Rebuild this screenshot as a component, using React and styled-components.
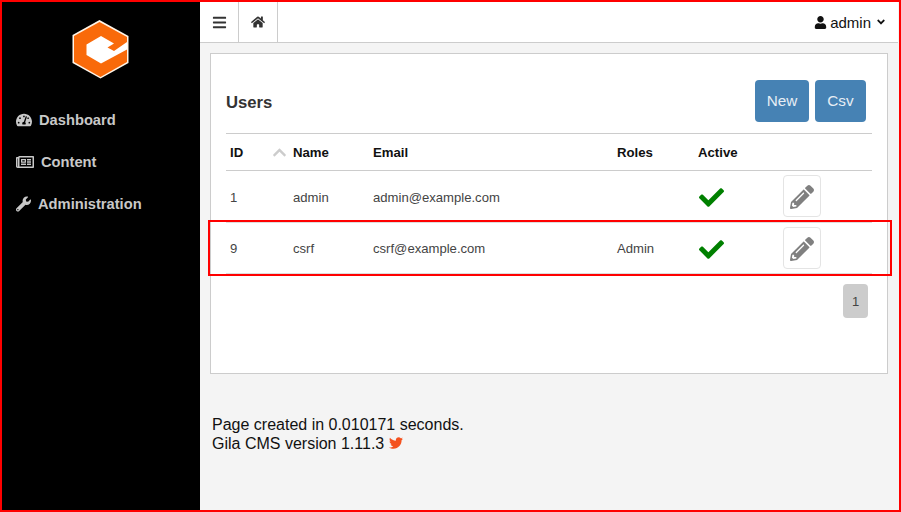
import React from "react";
import styled, { createGlobalStyle } from "styled-components";
import {
  FaBars,
  FaHome,
  FaTachometerAlt,
  FaRegNewspaper,
  FaWrench,
  FaUser,
  FaCheck,
  FaPencilAlt,
  FaTwitter,
  FaChevronUp,
  FaAngleDown,
} from "react-icons/fa";

const GlobalStyle = createGlobalStyle`
  html, body {
    margin: 0;
    padding: 0;
  }
  body {
    font-family: "Liberation Sans", Arial, sans-serif;
    font-size: 13px;
    color: #333;
    background: #f4f4f4;
  }
  * {
    box-sizing: border-box;
  }
`;

const Page = styled.div`
  position: relative;
  display: flex;
  width: 901px;
  height: 512px;
  border: 2px solid #f00;
  overflow: hidden;
  background: #f4f4f4;
`;

const Sidebar = styled.aside`
  flex: 0 0 198px;
  background: #000;
  padding-top: 18px;
`;

const LogoWrap = styled.div`
  display: flex;
  justify-content: center;
  height: 59px;
  margin-bottom: 20px;
`;

const NavItem = styled.a`
  display: flex;
  align-items: center;
  height: 42px;
  padding-left: 14px;
  color: #c8c8c8;
  font-size: 14.7px;
  font-weight: 700;

  svg {
    width: ${(p) => p.$iconSize || 16}px;
    height: 16px;
    margin-right: 7px;
  }
`;

const Main = styled.main`
  flex: 1;
  padding-right: 2px;
`;

const Topbar = styled.header`
  display: flex;
  align-items: stretch;
  height: 41px;
  background: #fff;
  border-bottom: 1px solid #ccc;
  color: #333;
`;

const TopButton = styled.div`
  display: flex;
  align-items: center;
  justify-content: center;
  width: 39px;
  border-right: 1px solid #ccc;
  font-size: ${(p) => p.$size}px;
`;

const UserMenu = styled.div`
  display: flex;
  align-items: center;
  margin-left: auto;
  padding-right: 11px;
  color: #111;
  font-size: 15px;
  gap: 3px;
`;

const MenuCaret = styled(FaAngleDown)`
  margin-left: 1px;
`;

const Panel = styled.section`
  height: 321px;
  margin: 10px 10px 0;
  padding: 26px 15px 0;
  background: #fff;
  border: 1px solid #ccc;
`;

const PanelHead = styled.div`
  display: flex;
  align-items: center;
  justify-content: space-between;
  height: 42px;
  padding-right: 6px;
  margin-bottom: 11px;
`;

const Title = styled.h2`
  margin: 0;
  padding-top: 4px;
  font-size: 16.7px;
  font-weight: 700;
  color: #333;
`;

const Actions = styled.div`
  display: flex;
  gap: 6px;
`;

const ActionButton = styled.button`
  width: ${(p) => p.$width}px;
  height: 42px;
  padding: 0;
  border: 0;
  border-radius: 4px;
  background: #4682b4;
  color: #e8eef4;
  font-family: inherit;
  font-size: 15.3px;
`;

const Table = styled.table`
  width: 646px;
  border-collapse: collapse;
  table-layout: fixed;
  border-top: 1px solid #ccc;
`;

const HeadCell = styled.th`
  position: relative;
  height: 37px;
  padding: 0 4px;
  border-bottom: 1px solid #ccc;
  color: #111;
  font-size: 13.2px;
  font-weight: 700;
  text-align: left;
`;

const SortIcon = styled(FaChevronUp)`
  position: absolute;
  right: 2px;
  top: 11px;
  width: 15px;
  height: 15px;
  color: #ccc;
`;

const Row = styled.tr`
  height: ${(p) => p.$height}px;
`;

const Cell = styled.td`
  padding: 1px 4px 0;
  border-bottom: 1px solid #ddd;
  color: #444;
  font-size: 13.1px;
`;

const EditCell = styled(Cell)`
  vertical-align: top;
  padding-top: 4px;
`;

const CheckIcon = styled(FaCheck)`
  display: block;
  width: 25px;
  height: 25px;
  margin: 1px 0 0 1px;
  color: #008000;
`;

const EditButton = styled.div`
  display: flex;
  align-items: center;
  justify-content: center;
  width: 38px;
  height: 42px;
  border: 1px solid #e4e4e4;
  border-radius: 4px;
  color: #808080;

  svg {
    width: 24px;
    height: 24px;
    margin-top: 1px;
  }
`;

const Pager = styled.div`
  display: flex;
  justify-content: flex-end;
  padding: 10px 4px 0 0;
`;

const PageNumber = styled.span`
  display: flex;
  align-items: center;
  justify-content: center;
  width: 25px;
  height: 34px;
  border-radius: 4px;
  background: #ccc;
  color: #444;
  font-size: 13px;
`;

const Footer = styled.footer`
  padding: 41px 0 0 12px;
  color: #111;
  font-size: 16px;
  line-height: 19px;

  svg {
    color: #f4511e;
    width: 14px;
    height: 14px;
    vertical-align: -1px;
  }
`;

const Highlight = styled.div`
  position: absolute;
  left: 206px;
  top: 218px;
  width: 684px;
  height: 56px;
  border: 2px solid #f00;
  pointer-events: none;
`;

const Logo = () => (
  <svg width="58" height="59" viewBox="0 0 58 59">
    <polygon points="27.5,0 56.5,16 56.5,43 28.5,58.5 0.5,43 0.5,15" fill="#fff5e8" />
    <polygon points="27.5,2 55,17 55,42 28.5,57 2,42 2,16" fill="#f96a0a" />
    <polygon
      points="14.5,24.5 29,16 42,23.5 35.5,27.5 42,31 55,22 55,29.5 29,43.5 14.5,35"
      fill="#fff"
    />
  </svg>
);

const users = [
  { id: 1, name: "admin", email: "admin@example.com", roles: "", height: 52 },
  { id: 9, name: "csrf", email: "csrf@example.com", roles: "Admin", height: 51 },
];

const columns = [
  { label: "ID", width: 63, sortable: true },
  { label: "Name", width: 80 },
  { label: "Email", width: 244 },
  { label: "Roles", width: 81 },
  { label: "Active", width: 85 },
  { label: "", width: 93 },
];

export default function App() {
  return (
    <>
      <GlobalStyle />
      <Page>
        <Sidebar>
          <LogoWrap>
            <Logo />
          </LogoWrap>
          <NavItem>
            <FaTachometerAlt />
            Dashboard
          </NavItem>
          <NavItem $iconSize={18}>
            <FaRegNewspaper />
            Content
          </NavItem>
          <NavItem $iconSize={15}>
            <FaWrench />
            Administration
          </NavItem>
        </Sidebar>
        <Main>
          <Topbar>
            <TopButton $size={15}>
              <FaBars />
            </TopButton>
            <TopButton $size={14}>
              <FaHome />
            </TopButton>
            <UserMenu>
              <FaUser size={13} />
              admin
              <MenuCaret size={12} />
            </UserMenu>
          </Topbar>
          <Panel>
            <PanelHead>
              <Title>Users</Title>
              <Actions>
                <ActionButton $width={54}>New</ActionButton>
                <ActionButton $width={51}>Csv</ActionButton>
              </Actions>
            </PanelHead>
            <Table>
              <colgroup>
                {columns.map((c) => (
                  <col key={c.label} width={c.width} />
                ))}
              </colgroup>
              <thead>
                <tr>
                  {columns.map((c) => (
                    <HeadCell key={c.label}>
                      {c.label}
                      {c.sortable && <SortIcon />}
                    </HeadCell>
                  ))}
                </tr>
              </thead>
              <tbody>
                {users.map((u) => (
                  <Row key={u.id} $height={u.height}>
                    <Cell>{u.id}</Cell>
                    <Cell>{u.name}</Cell>
                    <Cell>{u.email}</Cell>
                    <Cell>{u.roles}</Cell>
                    <Cell>
                      <CheckIcon />
                    </Cell>
                    <EditCell>
                      <EditButton>
                        <FaPencilAlt />
                      </EditButton>
                    </EditCell>
                  </Row>
                ))}
              </tbody>
            </Table>
            <Pager>
              <PageNumber>1</PageNumber>
            </Pager>
          </Panel>
          <Footer>
            Page created in 0.010171 seconds.
            <br />
            Gila CMS version 1.11.3 <FaTwitter />
          </Footer>
        </Main>
        <Highlight />
      </Page>
    </>
  );
}
